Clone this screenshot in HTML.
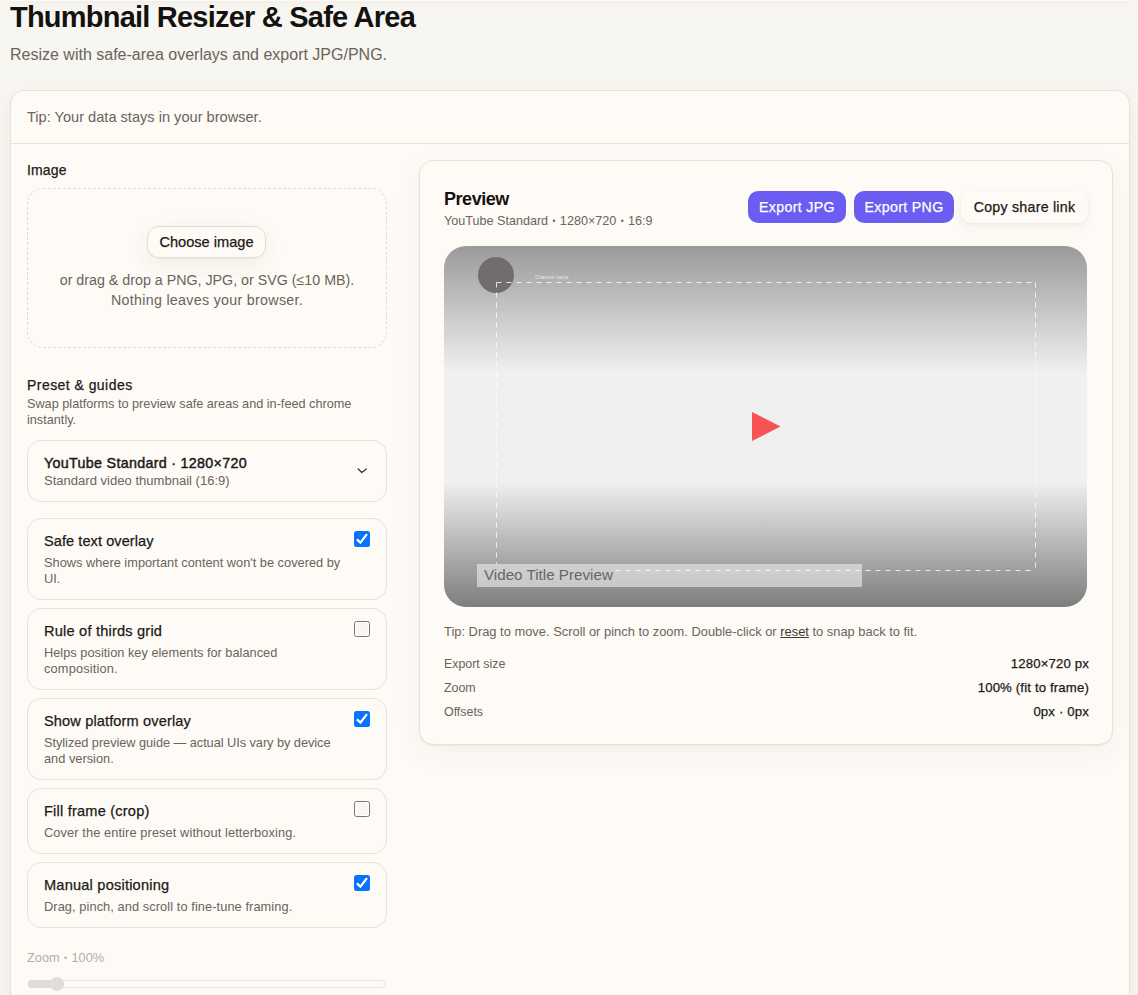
<!DOCTYPE html>
<html><head><meta charset="utf-8">
<style>
*{box-sizing:border-box;margin:0;padding:0}
html,body{width:1138px;height:995px;overflow:hidden}
body{background:#f8f6f1;font-family:"Liberation Sans",sans-serif;color:#1c1917;position:relative}
.nw{white-space:nowrap}
.bul{font-size:8.5px;margin:0 0.9px;vertical-align:1.3px}
.med{-webkit-text-stroke:0.25px currentColor}
h1{position:absolute;left:10px;top:0px;font-size:29px;line-height:34px;font-weight:700;letter-spacing:-0.78px;color:#141210;white-space:nowrap}
.sub{position:absolute;left:10px;top:44px;font-size:16px;line-height:22px;color:#6b635c;white-space:nowrap}
.main{position:absolute;left:10px;top:90px;width:1120px;height:1000px;background:#fefbf6;border:1px solid #e8e1d8;border-radius:14px;box-shadow:0 1px 2px rgba(60,40,20,.04),0 6px 24px rgba(60,40,20,.05)}
.tiprow{position:absolute;left:0;top:0;width:100%;height:53px;border-bottom:1px solid #e8e1d8}
.tiprow span{position:absolute;left:16px;top:16px;font-size:14.6px;line-height:20px;color:#6b635c;white-space:nowrap}
.lbl{position:absolute;font-size:14px;line-height:20px;color:#1c1917;white-space:nowrap}
.drop{position:absolute;left:27px;top:188px;width:360px;height:160px;border:1px dashed #e3dbd1;border-radius:16px}
.btn-choose{position:absolute;left:147px;top:226px;width:119px;height:32px;border:1px solid #e6ded4;border-radius:12px;background:#fefbf6;box-shadow:0 1px 2px rgba(60,40,20,.04),0 6px 22px rgba(60,40,20,.07);font-size:14.6px;line-height:30px;text-align:center;color:#1c1917;letter-spacing:0px}
.droptxt{position:absolute;left:27px;top:270px;width:360px;text-align:center;font-size:14.25px;line-height:20px;color:#6b635c}
.pdesc{position:absolute;left:27px;top:396px;white-space:nowrap;font-size:12.7px;line-height:16px;color:#6b635c}
.select{position:absolute;left:27px;top:440px;width:360px;height:62px;border:1px solid #e8e1d8;border-radius:14px;background:#fefbf6}
.select .t{position:absolute;left:16px;top:12px;font-size:14.3px;line-height:20px;font-weight:400;-webkit-text-stroke:0.45px currentColor;letter-spacing:0.3px;color:#1c1917;white-space:nowrap}
.select .s{position:absolute;left:16px;top:32px;font-size:13.05px;line-height:16px;color:#6b635c;white-space:nowrap}
.select svg{position:absolute;left:326px;top:24px}
.card{position:absolute;left:27px;width:360px;border:1px solid #e8e1d8;border-radius:14px;background:#fefbf6}
.card .t{position:absolute;left:16px;letter-spacing:0.2px;top:12px;font-size:14.6px;line-height:20px;color:#1c1917;white-space:nowrap}
.card .d{position:absolute;left:16px;top:36px;white-space:nowrap;font-size:12.8px;line-height:16px;color:#6b635c}
.cb{position:absolute;left:326px;top:12px;width:16px;height:16px;border-radius:2.5px}
.cb.on{background:#0873ff}
.cb.off{background:#f8f6f3;border:1px solid #7a7773;box-shadow:inset 0 0 0 1px #fff}
.cb svg{position:absolute;left:0;top:0}
.zlbl{position:absolute;left:27px;top:950px;font-size:12.75px;line-height:16px;color:#b3aea8;white-space:nowrap}
.track{position:absolute;left:28px;top:980px;width:358px;height:8px;border-radius:4px;border:1px solid #ebe7e1;background:#fefbf6}
.fill{position:absolute;left:28px;top:980px;width:32px;height:8px;border-radius:4px;background:#dfdddb}
.thumb{position:absolute;left:50px;top:977px;width:14px;height:14px;border-radius:50%;background:#e0dedc}
.preview{position:absolute;left:419px;top:160px;width:694px;height:585px;background:#fefbf6;border:1px solid #e8e1d8;border-radius:14px;box-shadow:0 1px 2px rgba(60,40,20,.05),0 8px 28px rgba(60,40,20,.05)}
.ptitle{position:absolute;left:444px;top:186.6px;letter-spacing:-0.45px;font-size:18px;line-height:24px;font-weight:700;color:#141210;white-space:nowrap}
.psub{position:absolute;left:444px;top:213px;font-size:12.6px;line-height:16px;color:#6b635c;white-space:nowrap}
.pbtn{position:absolute;top:191px;height:32px;border-radius:10px;font-size:14.2px;letter-spacing:0.35px;line-height:32px;text-align:center;white-space:nowrap}
.pbtn.pri{background:#6b5cf2;color:#fff}
.pbtn.sec{background:#fefbf6;color:#1c1917;box-shadow:0 1px 3px rgba(60,40,20,.06),0 4px 12px rgba(60,40,20,.05)}
.canvas{position:absolute;left:444px;top:246px;width:643px;height:361px;border-radius:22px;overflow:hidden;background:linear-gradient(180deg,#9a9a9a 0%,#f0f0f0 35%,#f0f0f0 65.2%,#7d7d7d 100%)}
.avatar{position:absolute;left:34px;top:11px;width:36px;height:36px;border-radius:50%;background:#736c6c}
.chname{position:absolute;left:91px;top:28px;font-size:5px;line-height:6px;letter-spacing:0.1px;color:rgba(255,255,255,.75);white-space:nowrap}
.titlebar{position:absolute;left:33px;top:318px;width:385px;height:23px;background:rgba(235,235,235,.62)}
.titlebar span{position:absolute;left:7px;top:-0.5px;font-size:15.2px;line-height:21px;color:#666;white-space:nowrap}
.canvas svg.dash{position:absolute;left:0;top:0}
.play{position:absolute;left:308px;top:166px}
.ptip{position:absolute;left:444px;top:623.5px;font-size:12.9px;line-height:16px;color:#6b635c;white-space:nowrap}
.ptip u{color:#3d3733}
.row{position:absolute;left:444px;width:644px;height:16px;font-size:12.4px;line-height:16px}
.row .k{position:absolute;left:0;top:0;color:#6b635c;white-space:nowrap}
.row .v{position:absolute;right:-1px;top:0;color:#1c1917;white-space:nowrap;font-size:13.2px;letter-spacing:0.15px}
</style></head><body>
<div style="position:absolute;left:10px;top:-40px;width:1120px;height:41px;background:#fefbf6;box-shadow:0 3px 10px rgba(60,40,20,.035)"></div>
<h1>Thumbnail Resizer &amp; Safe Area</h1>
<div class="sub">Resize with safe-area overlays and export JPG/PNG.</div>
<div class="main">
  <div class="tiprow"><span>Tip: Your data stays in your browser.</span></div>
</div>

<div class="lbl med" style="left:27px;top:160px;letter-spacing:0.15px">Image</div>
<div class="drop"></div>
<div class="btn-choose med">Choose image</div>
<div class="droptxt">or drag &amp; drop a PNG, JPG, or SVG (≤10 MB).<br><span style="letter-spacing:0.3px">Nothing leaves your browser.</span></div>

<div class="lbl med" style="left:27px;top:375px;letter-spacing:0.45px">Preset &amp; guides</div>
<div class="pdesc">Swap platforms to preview safe areas and in-feed chrome<br>instantly.</div>
<div class="select">
  <div class="t">YouTube Standard · 1280×720</div>
  <div class="s">Standard video thumbnail (16:9)</div>
  <svg width="16" height="12" viewBox="0 0 16 12"><path d="M4.2 3.9 L7.8 7.5 L12.2 4.0" fill="none" stroke="#3f3934" stroke-width="1.35" stroke-linecap="round" stroke-linejoin="round"/></svg>
</div>

<div class="card" style="top:518px;height:82px">
  <div class="t med" style="letter-spacing:0.05px">Safe text overlay</div>
  <div class="d">Shows where important content won't be covered by<br>UI.</div>
  <div class="cb on"><svg width="16" height="16" viewBox="0 0 16 16"><path d="M2.9 8.3 L6.4 11.6 L12.95 3.15" fill="none" stroke="#fff" stroke-width="2.3" stroke-linecap="butt"/></svg></div>
</div>
<div class="card" style="top:608px;height:82px">
  <div class="t med">Rule of thirds grid</div>
  <div class="d">Helps position key elements for balanced<br><span style="letter-spacing:0.16px">composition.</span></div>
  <div class="cb off"></div>
</div>
<div class="card" style="top:698px;height:82px">
  <div class="t med" style="letter-spacing:0.12px">Show platform overlay</div>
  <div class="d"><span style="letter-spacing:-0.06px">Stylized preview guide — actual UIs vary by device</span><br>and version.</div>
  <div class="cb on"><svg width="16" height="16" viewBox="0 0 16 16"><path d="M2.9 8.3 L6.4 11.6 L12.95 3.15" fill="none" stroke="#fff" stroke-width="2.3" stroke-linecap="butt"/></svg></div>
</div>
<div class="card" style="top:788px;height:66px">
  <div class="t med">Fill frame (crop)</div>
  <div class="d" style="letter-spacing:0.1px">Cover the entire preset without letterboxing.</div>
  <div class="cb off"></div>
</div>
<div class="card" style="top:862px;height:66px">
  <div class="t med">Manual positioning</div>
  <div class="d" style="letter-spacing:0.08px">Drag, pinch, and scroll to fine-tune framing.</div>
  <div class="cb on"><svg width="16" height="16" viewBox="0 0 16 16"><path d="M2.9 8.3 L6.4 11.6 L12.95 3.15" fill="none" stroke="#fff" stroke-width="2.3" stroke-linecap="butt"/></svg></div>
</div>

<div class="zlbl">Zoom <span class="bul">•</span> 100%</div>
<div class="track"></div>
<div class="fill"></div>
<div class="thumb"></div>

<div class="preview"></div>
<div class="ptitle">Preview</div>
<div class="psub">YouTube Standard <span class="bul">•</span> 1280×720 <span class="bul">•</span> 16:9</div>
<div class="pbtn pri med" style="left:748px;width:98px">Export JPG</div>
<div class="pbtn pri med" style="left:854px;width:100px">Export PNG</div>
<div class="pbtn sec med" style="left:961px;width:127px;letter-spacing:0.25px">Copy share link</div>

<div class="canvas">
  <div class="avatar"></div>
  <div class="chname">Channel name</div>
  <div class="titlebar"><span>Video Title Preview</span></div>
  <svg class="dash" width="643" height="361"><g fill="none" stroke="rgba(255,255,255,.8)" stroke-width="1" stroke-dasharray="5 5"><path d="M52.5 36.5 H591.5"/><path d="M52.5 36.5 V318"/><path d="M591.5 36.5 V324.5"/><path d="M591.5 324.5 H170" stroke-dashoffset="5"/></g></svg>
  <svg class="play" width="30" height="30" viewBox="0 0 30 30"><path d="M0 0 L28.5 14.5 L0 29 Z" fill="#f75353"/></svg>
</div>

<div class="ptip">Tip: Drag to move. Scroll or pinch to zoom. Double-click or <u>reset</u> to snap back to fit.</div>
<div class="row" style="top:656px"><span class="k">Export size</span><span class="v med">1280×720 px</span></div>
<div class="row" style="top:680px"><span class="k">Zoom</span><span class="v med">100% (fit to frame)</span></div>
<div class="row" style="top:704px"><span class="k">Offsets</span><span class="v med">0px · 0px</span></div>
</body></html>
